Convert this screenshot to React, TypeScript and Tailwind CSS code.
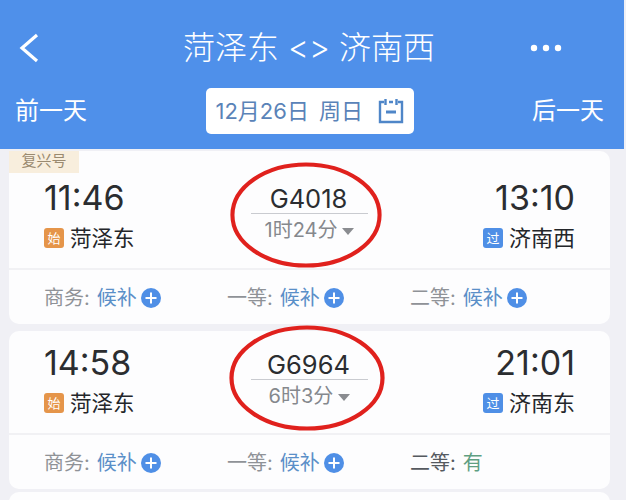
import React from "react";

const font = { fontFamily: 'Inter, "Noto Sans CJK SC", sans-serif' };

function Plus() {
  return (
    <svg width="20" height="20" viewBox="0 0 20 20" className="shrink-0">
      <circle cx="10" cy="10" r="10" fill="#4f8fe6" />
      <path d="M10 4.5v11M4.5 10h11" stroke="#fff" strokeWidth="2" />
    </svg>
  );
}

function Seat({ label, value, green, dark }: { label: string; value: string; green?: boolean; dark?: boolean }) {
  return (
    <div className="flex items-center pt-[1px] text-[20px] leading-none">
      <span className={dark ? "text-[#55595f]" : "text-[#8f9297]"}>{label}:</span>
      <span className={`ml-[7px] ${green ? "text-[#5f9f82]" : "text-[#5a8fc8]"}`}>{value}</span>
      {!green && <span className="ml-[4px] flex"><Plus /></span>}
    </div>
  );
}

function Ring({ className }: { className: string }) {
  return (
    <svg className={`absolute pointer-events-none ${className}`} viewBox="0 0 156 108" fill="none" preserveAspectRatio="none">
      <ellipse cx="78" cy="54" rx="75.5" ry="51.5" stroke="#e0211d" strokeWidth="4.2" />
    </svg>
  );
}

function Card({
  dep, arr, from, to, no, dur, ribbon, last, lastGreen, topClass, centerClass, ring,
}: {
  dep: string; arr: string; from: string; to: string; no: string; dur: string; ribbon?: boolean;
  last: string; lastGreen?: boolean; topClass: string; centerClass: string; ring: string;
}) {
  return (
    <div className="relative w-[601px] rounded-[10px] bg-[#fdfdfe]">
      {ribbon && (
        <div className="absolute left-0 top-0 flex h-[22px] w-[70px] items-center justify-center bg-[#f8eedd] pb-[1px] text-[15px] text-[#9a8a70]">
          复兴号
        </div>
      )}
      <div className={`grid grid-cols-3 border-b-2 border-[#f1f1f4] px-[35px] ${topClass}`}>
        <div className="flex flex-col items-start">
          <div className="h-[34px] text-[34px] leading-[34px] text-[#2b2d30]">{dep}</div>
          <div className="mt-[8px] flex items-center">
            <span className="flex h-[20px] w-[20px] items-center justify-center rounded-[3px] bg-[#e5954a] text-[13px] leading-none text-[#fff]">始</span>
            <span className="ml-[6px] text-[21.5px] leading-[30px] text-[#24262a]">{from}</span>
          </div>
        </div>
        <div className={`flex flex-col items-center ${centerClass}`}>
          <div className="w-[117px] border-b border-[#c9cbd0] pb-[1px] pr-[2px] text-center text-[25.5px] leading-[27px] text-[#2b2d30]">{no}</div>
          <div className="mt-[3px] flex items-center text-[20px] leading-[26px] text-[#85888d]">
            {dur}
            <span className="ml-[5px] mt-[2px] h-0 w-0 border-x-[6px] border-t-[7px] border-x-transparent border-t-[#8a8c90]" />
          </div>
        </div>
        <div className="flex flex-col items-end">
          <div className="h-[34px] text-[34px] leading-[34px] text-[#2b2d30]">{arr}</div>
          <div className="mt-[8px] flex items-center">
            <span className="flex h-[20px] w-[20px] items-center justify-center rounded-[3px] bg-[#4f8fe6] text-[13px] leading-none text-[#fff]">过</span>
            <span className="ml-[6px] text-[22px] leading-[30px] text-[#24262a]">{to}</span>
          </div>
        </div>
      </div>
      <div className="grid h-[54px] grid-cols-[183px_183px_1fr] items-center pl-[35px]">
        <Seat label="商务" value="候补" />
        <Seat label="一等" value="候补" />
        <Seat label="二等" value={last} green={lastGreen} dark={lastGreen} />
      </div>
      <Ring className={ring} />
    </div>
  );
}

export default function App() {
  return (
    <div className="h-[500px] w-[626px] overflow-hidden bg-[#f0f0f5]" style={font}>
      <div className="flex h-[149px] w-[624px] flex-col bg-[#4f90ea] text-[#fff]">
        <div className="grid h-[88px] grid-cols-[1fr_auto_1fr] items-center pl-[19px] pr-[25px] pt-[8px]">
          <svg width="20" height="30" viewBox="0 0 20 30" fill="none">
            <path d="M18 2 L3 15 L18 28" stroke="#fff" strokeWidth="3.2" />
          </svg>
          <div className="text-[32px] font-light leading-none">菏泽东 &lt;&gt; 济南西</div>
          <svg className="mr-[37px] justify-self-end" width="32" height="8" viewBox="0 0 32 8" fill="#fff">
            <circle cx="4" cy="4" r="3.2" /><circle cx="16" cy="4" r="3.2" /><circle cx="28" cy="4" r="3.2" />
          </svg>
        </div>
        <div className="flex items-center justify-between pl-[15px] pr-[20px]">
          <div className="text-[24px] leading-none">前一天</div>
          <div className="flex h-[46px] w-[208px] items-center rounded-[5px] bg-[#fff] pl-[10px] text-[22px] text-[#5a83b8]">
            <span>12月26日</span>
            <span className="ml-[10px]">周日</span>
            <svg className="ml-[15px]" width="26" height="26" viewBox="0 0 26 26" fill="none" stroke="#4f86c8" strokeWidth="2.4">
              <path d="M6 4H2v20h22V4h-4M11 4h4" />
              <path d="M7.5 1v6M18.5 1v6" />
              <path d="M8 14h10" strokeWidth="3" />
            </svg>
          </div>
          <div className="text-[24px] leading-none">后一天</div>
        </div>
      </div>
      <div className="flex flex-col items-start gap-[7px] pl-[9px] pt-[2px]">
        <Card dep="11:46" arr="13:10" from="菏泽东" to="济南西" no="G4018" dur="1时24分" ribbon last="候补" topClass="h-[119px] pt-[30px]" centerClass="mt-[4px]" ring="left-[221px] top-[11px] h-[106px] w-[152px]" />
        <Card dep="14:58" arr="21:01" from="菏泽东" to="济南东" no="G6964" dur="6时3分" last="有" lastGreen topClass="h-[104px] pt-[15px]" centerClass="mt-[5px]" ring="left-[220px] top-[-6px] h-[106px] w-[156px]" />
        <div className="-mt-[4px] h-[20px] w-[601px] rounded-[10px] bg-[#fdfdfe]" />
      </div>
    </div>
  );
}
